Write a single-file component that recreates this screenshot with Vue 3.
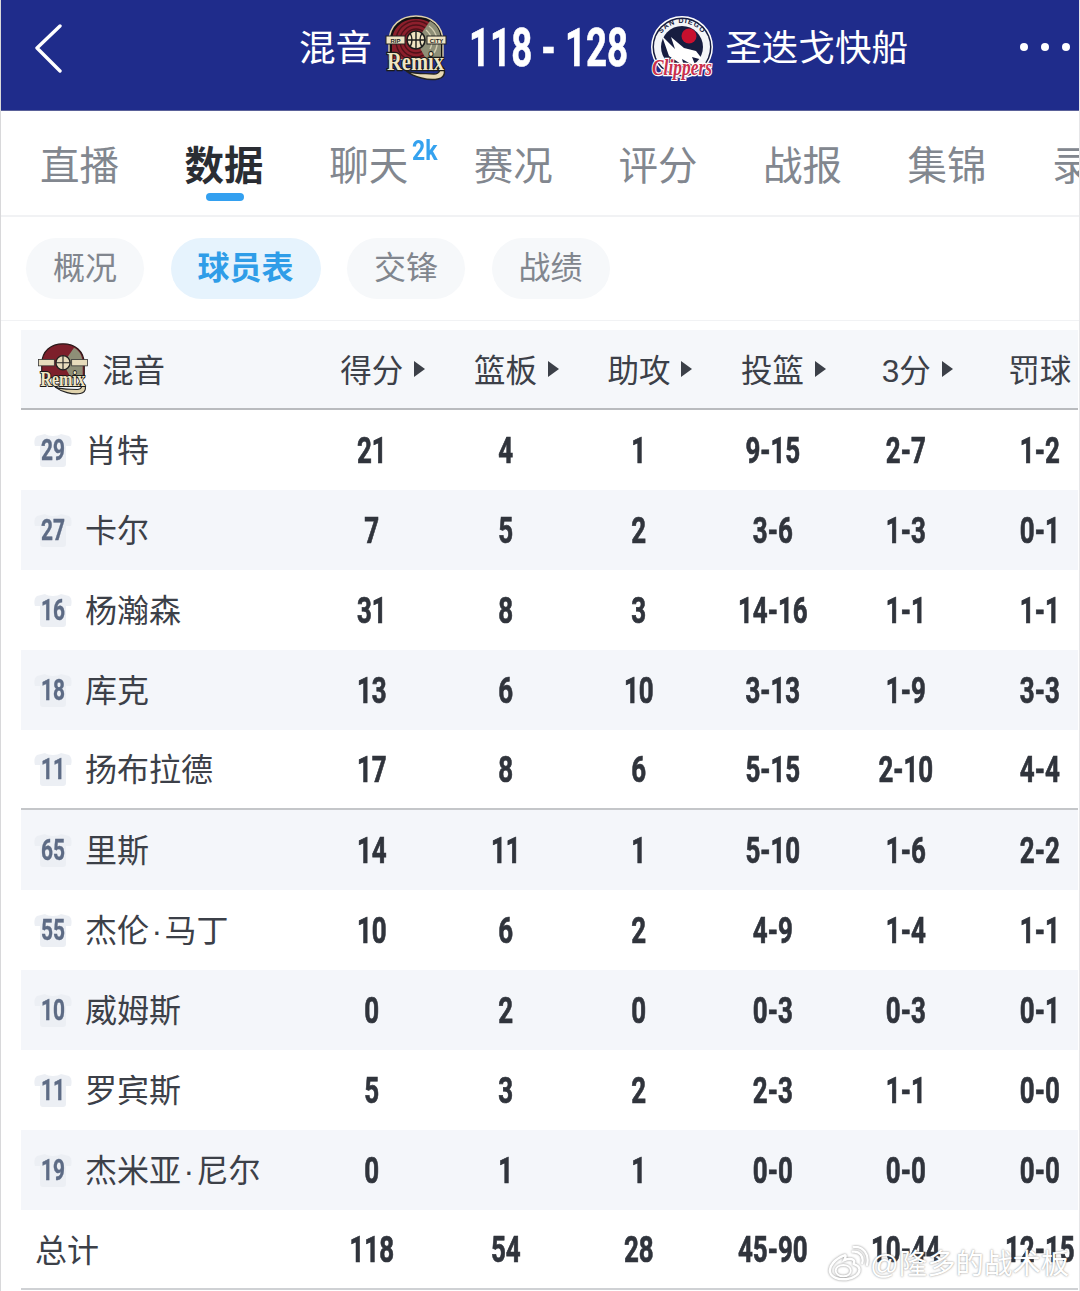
<script setup>
const tabs = ['直播', '数据', '聊天', '赛况', '评分', '战报', '集锦', '录像']
const pills = ['概况', '球员表', '交锋', '战绩']
const heads = ['得分', '篮板', '助攻', '投篮', '3分', '罚球']
const players = [
  ['29', '肖特', '21', '4', '1', '9-15', '2-7', '1-2'],
  ['27', '卡尔', '7', '5', '2', '3-6', '1-3', '0-1'],
  ['16', '杨瀚森', '31', '8', '3', '14-16', '1-1', '1-1'],
  ['18', '库克', '13', '6', '10', '3-13', '1-9', '3-3'],
  ['11', '扬布拉德', '17', '8', '6', '5-15', '2-10', '4-4'],
  ['65', '里斯', '14', '11', '1', '5-10', '1-6', '2-2'],
  ['55', '杰伦 · 马丁', '10', '6', '2', '4-9', '1-4', '1-1'],
  ['10', '威姆斯', '0', '2', '0', '0-3', '0-3', '0-1'],
  ['11', '罗宾斯', '5', '3', '2', '2-3', '1-1', '0-0'],
  ['19', '杰米亚 · 尼尔', '0', '1', '1', '0-0', '0-0', '0-0'],
]
const totals = ['118', '54', '28', '45-90', '10-44', '12-15']
</script>

<template>
  <div class="page">
    <header class="top">
      <svg class="back" width="30" height="50" viewBox="0 0 30 50">
        <path d="M26 2 L3 24 L26 47" fill="none" stroke="#fff" stroke-width="3.4" stroke-linecap="round" stroke-linejoin="round" />
      </svg>
      <div class="match">
        <span class="team">混音</span>
        <svg class="logo-a" width="64" height="66" viewBox="0 0 64 66">
          <path d="M5 44 V27 C5 10 17 1 32 1 C47 1 59 10 59 27 V44 Z" fill="#111" stroke="#ddd0ab" stroke-width="1.4" />
          <path d="M8 44 V27 C8 12 19 4 32 4 C45 4 56 12 56 27 V44 Z" fill="#8c1f2c" />
          <g fill="none" stroke="#4e1219" stroke-width="1.4">
            <circle cx="32" cy="26" r="20" />
            <circle cx="32" cy="26" r="16" />
            <circle cx="32" cy="26" r="12" />
          </g>
          <path d="M32 26 L46 6 C54 10 57 18 57 27 V42 L42 44 Z" fill="#8e8f77" />
          <g fill="none" stroke="#d3cdb0" stroke-width="1.4">
            <path d="M45 11 A20 20 0 0 1 50 38" />
            <path d="M42 15 A15 15 0 0 1 46 34" />
          </g>
          <circle cx="32" cy="25" r="9" fill="#efe4c3" stroke="#1c1c1c" stroke-width="1.6" />
          <path d="M32 16 V34 M23 25 H41 M26 18 Q30 25 26 32 M38 18 Q34 25 38 32" fill="none" stroke="#1c1c1c" stroke-width="1.4" />
          <rect x="2" y="21" width="19" height="8" fill="#efe4c3" stroke="#222" />
          <rect x="43" y="21" width="19" height="8" fill="#efe4c3" stroke="#222" />
          <text x="11.500" y="27.500" text-anchor="middle" class="tiny">RIP</text>
          <text x="52.500" y="27.500" text-anchor="middle" class="tiny">CITY</text>
          <path d="M22 56 C34 60 42 58 50 59 C56 59 57 54 55 50 C62 52 63 62 54 64 C44 66 30 62 22 56 Z" fill="#e6d9b4" stroke="#222" stroke-width="1.4" />
          <text x="3" y="55" textLength="57" lengthAdjust="spacingAndGlyphs" class="remix">Remix</text>
        </svg>
        <span class="score">118 - 128</span>
        <svg class="logo-b" width="66" height="66" viewBox="0 0 66 66">
          <defs><path id="arc" d="M8 33 A25 25 0 0 1 58 33" /></defs>
          <circle cx="33" cy="32" r="31" fill="#fff" />
          <circle cx="33" cy="32" r="29.500" fill="#171d40" />
          <circle cx="33" cy="32" r="28" fill="#f4f5f8" />
          <circle cx="33" cy="32" r="21" fill="#171d40" />
          <text class="arc-text"><textPath href="#arc" startOffset="50%" text-anchor="middle">SAN DIEGO</textPath></text>
          <circle cx="40" cy="21" r="7.500" fill="#c8102e" />
          <path d="M13 21 L26 34 L22 22 L35 33 L47 36 L54 45 L43 42 L47 52 L33 44 L35 51 L20 41 Z" fill="#fff" />
          <text x="3" y="60" textLength="60" lengthAdjust="spacingAndGlyphs" class="clip">Clippers</text>
        </svg>
        <span class="team">圣迭戈快船</span>
      </div>
      <div class="dots"><i></i><i></i><i></i></div>
    </header>

    <nav class="tabs">
      <div v-for="t in tabs" :key="t" class="tab" :class="{ on: t === '数据' }">
        {{ t }}
        <sup v-if="t === '聊天'" class="badge">2k</sup>
      </div>
    </nav>

    <div class="pills">
      <div v-for="p in pills" :key="p" class="pill" :class="{ on: p === '球员表' }">{{ p }}</div>
    </div>

    <section class="table">
      <div class="row head">
        <div class="who">
          <svg class="small-logo" width="52" height="52" viewBox="0 0 64 66">
            <path d="M5 44 V27 C5 10 17 1 32 1 C47 1 59 10 59 27 V44 Z" fill="#7d1f2b" stroke="#2a1a1a" stroke-width="1.500" />
            <path d="M32 26 L46 6 C54 10 57 18 57 27 V42 L42 44 Z" fill="#8e8f77" />
            <circle cx="32" cy="25" r="9" fill="#e7dcbc" stroke="#222" stroke-width="1.600" />
            <path d="M32 16 V34 M23 25 H41" stroke="#222" stroke-width="1.400" />
            <rect x="1" y="21" width="20" height="8" fill="#e7dcbc" stroke="#333" />
            <rect x="43" y="21" width="20" height="8" fill="#e7dcbc" stroke="#333" />
            <path d="M22 56 C34 60 42 58 50 59 C56 59 57 54 55 50 C62 52 63 62 54 64 C44 66 30 62 22 56 Z" fill="#e0d3ad" stroke="#222" stroke-width="1.400" />
            <text x="3" y="55" textLength="57" lengthAdjust="spacingAndGlyphs" class="remix">Remix</text>
          </svg>
          <span class="head-name">混音</span>
        </div>
        <div v-for="h in heads" :key="h" class="cell head-cell">
          <span class="head-text">{{ h }}<i class="tri"></i></span>
        </div>
      </div>

      <div v-for="(p, i) in players" :key="i" class="row body" :class="{ alt: i % 2 === 1, split: i === 4 }">
        <div class="who">
          <div class="shirt">
            <svg width="38" height="34" viewBox="0 0 38 34">
              <path d="M11 1 C14 3.500 24 3.500 27 1 L35 3 C38 5 38 10 37 13 L32 13 V31 C32 33 31 34 29 34 H9 C7 34 6 33 6 31 V13 L1 13 C0 10 0 5 3 3 Z" fill="#eceff4" />
            </svg>
            <span class="num">{{ p[0] }}</span>
          </div>
          <span class="name">{{ p[1] }}</span>
        </div>
        <div v-for="(v, j) in p.slice(2)" :key="j" class="cell val">{{ v }}</div>
      </div>

      <div class="row body total">
        <div class="who"><span class="total-name">总计</span></div>
        <div v-for="(v, j) in totals" :key="j" class="cell val">{{ v }}</div>
      </div>
    </section>

    <div class="mark">
      <svg width="42" height="36" viewBox="0 0 44 38">
        <path d="M18 10 C8 14 2 21 3 27 C4 33 12 36 20 35 C29 34 35 29 34 24 C33 20 29 20 28 19 C30 14 26 12 18 15 C20 11 20 9 18 10 Z" fill="none" stroke="#fff" stroke-width="2.600" />
        <ellipse cx="17" cy="26" rx="8" ry="6" fill="none" stroke="#fff" stroke-width="2" />
        <path d="M27 6 C34 5 39 11 37 18 M28 1 C38 0 45 9 42 20" fill="none" stroke="#fff" stroke-width="2.400" stroke-linecap="round" />
      </svg>
      <span>@隆多的战术板</span>
    </div>
  </div>
</template>

<style>
html, body { margin: 0; background: #fff; }
</style>

<style scoped>
.page {
  position: relative;
  width: 1080px;
  height: 1291px;
  overflow: hidden;
  background: #fff;
  border-left: 1px solid #d8d8da;
  border-right: 1px solid #e6e6e8;
  box-sizing: border-box;
  font-family: "Liberation Sans", "Noto Sans CJK SC", sans-serif;
}
.top {
  height: 111px;
  margin: 0 -1px;
  box-sizing: border-box;
  background: #1f2c8b;
  border-bottom: 1px solid #5a6199;
  padding-bottom: 12px;
  display: flex;
  align-items: center;
  color: #fff;
}
.back { margin-left: 34px; flex: none; }
.match {
  margin-left: 235px;
  display: flex;
  align-items: center;
  margin-top: -3px;
}
.team { font-size: 36.600px; line-height: 50px; margin-top: 3px; }
.logo-a { margin-left: 12px; margin-right: 21px; flex: none; }
.logo-b { margin-left: 21px; margin-right: 10px; flex: none; }
.score {
  flex: none;
  width: 159px;
  font-family: "Roboto", sans-serif;
  font-weight: 700;
  font-size: 54px;
  white-space: nowrap;
  transform: scaleX(.68);
  transform-origin: left center;
  -webkit-text-stroke: .6px #fff;
}
.remix { font-family: "Liberation Serif", serif; font-weight: 700; font-size: 26px; fill: #efe4c3; stroke: #1a1a1a; stroke-width: 2.400; paint-order: stroke; }
.tiny { font-family: "Liberation Sans", sans-serif; font-weight: 700; font-size: 6px; fill: #222; }
.arc-text { font-family: "Liberation Sans", sans-serif; font-weight: 700; font-size: 7px; letter-spacing: 1px; fill: #171d40; }
.clip { font-family: "Liberation Serif", serif; font-style: italic; font-weight: 700; font-size: 24px; fill: #c9304d; stroke: #fff; stroke-width: 2.400; paint-order: stroke; }
.dots { margin-left: auto; margin-right: 10px; display: flex; gap: 13px; margin-top: -5px; }
.dots i { width: 8px; height: 8px; border-radius: 50%; background: #fff; }

.tabs {
  height: 106px;
  box-sizing: border-box;
  padding: 27px 0 0 39px;
  border-bottom: 2px solid #f1f2f4;
  display: flex;
  gap: 66.600px;
  overflow: hidden;
}
.tab {
  position: relative;
  flex: none;
  width: 78px;
  font-size: 39.500px;
  line-height: 56px;
  color: #82878f;
  white-space: nowrap;
}
.tab.on { color: #2a2d33; font-weight: 700; }
.tab.on::after {
  content: "";
  position: absolute;
  left: 21px;
  top: 55px;
  width: 38px;
  height: 8px;
  border-radius: 4px;
  background: #33a0f0;
}
.badge {
  position: absolute;
  left: 83px;
  top: -4px;
  font-family: "Roboto", sans-serif;
  font-size: 28px;
  line-height: 34px;
  font-weight: 700;
  color: #35a2ef;
  transform: scaleX(.82);
  transform-origin: left center;
}
.pills {
  height: 104px;
  box-sizing: border-box;
  padding: 21px 0 0 25px;
  border-bottom: 1px solid #f1f2f4;
  display: flex;
  gap: 26.500px;
}
.pill {
  height: 61px;
  padding: 0 27px;
  border-radius: 31px;
  background: #f6f8fa;
  color: #81868e;
  font-size: 32px;
  line-height: 61px;
}
.pill.on { background: #e6f3fd; color: #2f9de8; font-weight: 700; }

.table {
  margin: 9px 1px 0 20px;
  overflow: hidden;
}
.row {
  display: grid;
  grid-template-columns: 284px repeat(6, 133.600px);
  align-items: center;
  height: 80px;
  box-sizing: border-box;
}
.head { height: 80px; background: #f5f7fa; border-bottom: 2px solid #b9bbbe; }
.body.alt { background: #f4f6fa; }
.body.split { border-bottom: 2px solid #c4c6c9; }
.total { border-bottom: 2px solid #cfd1d4; }
.who { display: flex; align-items: center; min-width: 0; }
.small-logo { margin-left: 16px; margin-right: 13px; flex: none; }
.head-name { font-size: 31.500px; color: #3c4048; margin-bottom: 3px; }
.head-cell {
  font-size: 31.500px;
  color: #3c4048;
  margin-bottom: 3px;
}
.head-text { position: relative; display: inline-block; }
.tri {
  position: absolute;
  left: 100%;
  margin-left: 11px;
  top: 50%;
  margin-top: -7px;
  border-left: 11px solid #3c4048;
  border-top: 8px solid transparent;
  border-bottom: 8px solid transparent;
}
.cell { text-align: center; white-space: nowrap; }
.val {
  font-family: "Roboto", sans-serif;
  font-weight: 700;
  font-size: 36px;
  color: #30343c;
  margin-top: 2px;
  transform: scaleX(.72);
  -webkit-text-stroke: .7px #30343c;
}
.shirt {
  position: relative;
  margin-left: 13px;
  width: 38px;
  height: 34px;
  flex: none;
}
.shirt svg { display: block; }
.num {
  position: absolute;
  inset: 0;
  text-align: center;
  font-family: "Roboto", sans-serif;
  font-weight: 700;
  font-size: 29px;
  line-height: 34px;
  color: #5d6b85;
  transform: scaleX(.72);
  -webkit-text-stroke: .4px #5d6b85;
}
.name { margin: 0 0 4px 13px; font-size: 32px; color: #3c4048; white-space: nowrap; word-spacing: -6.500px; }
.total-name { margin: 0 0 2px 14px; font-size: 32px; color: #3c4048; }

.mark {
  position: absolute;
  left: 826px;
  top: 1245px;
  display: flex;
  align-items: center;
  gap: 1px;
  color: #fff;
  font-size: 28.400px;
  line-height: 38px;
  white-space: nowrap;
  text-shadow: 0 0 2px rgba(90, 90, 90, .75);
}
.mark svg { flex: none; filter: drop-shadow(0 0 1px rgba(90, 90, 90, .7)); }
</style>
